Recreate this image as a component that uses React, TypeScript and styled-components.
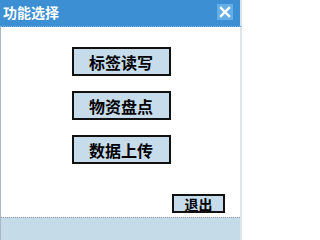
import styled, { createGlobalStyle } from "styled-components";

const GlobalStyle = createGlobalStyle`
  html, body {
    margin: 0;
    padding: 0;
    background: #ffffff;
  }
  * {
    box-sizing: border-box;
  }
`;

const cjk = `"Noto Sans CJK SC", "Noto Sans CJK TC", sans-serif`;

const Window = styled.div`
  width: 242px;
  height: 240px;
  display: flex;
  flex-direction: column;
  background: #ffffff;
  overflow: hidden;
`;

const TitleBar = styled.div`
  height: 27px;
  display: flex;
  align-items: center;
  justify-content: space-between;
  padding: 0 7px 3px 3px;
  background: #3d8fd3;
  border-bottom: 1px dotted #7fb4df;
  border-right: 2px solid #d8e4ee;
`;

const Title = styled.span`
  font-family: ${cjk};
  font-size: 14px;
  font-weight: 700;
  color: #ffffff;
  line-height: 1;
`;

const CloseBox = styled.div`
  width: 16px;
  height: 16px;
  display: flex;
  align-items: center;
  justify-content: center;
  background: #66aee8;
`;

const Body = styled.div`
  flex: 1;
  display: flex;
  flex-direction: column;
  border-left: 1px solid #a9b7c4;
  border-right: 2px solid #dfe5ea;
`;

const MenuList = styled.div`
  display: flex;
  flex-direction: column;
  align-items: center;
  gap: 15px;
  padding-top: 20px;
`;

const MenuButton = styled.button`
  width: 99px;
  height: 29px;
  margin-left: 1px;
  display: flex;
  align-items: center;
  justify-content: center;
  padding: 0;
  background: #c7dcea;
  border: 2px solid #111111;
  font-family: ${cjk};
  font-size: 16px;
  font-weight: 700;
  color: #000000;
  cursor: pointer;
`;

const ExitRow = styled.div`
  display: flex;
  justify-content: flex-end;
  padding-right: 15px;
  margin-top: 30px;
`;

const ExitButton = styled.button`
  width: 53px;
  height: 19px;
  display: flex;
  align-items: center;
  justify-content: center;
  padding: 0;
  background: #c7dcea;
  border: 2px solid #111111;
  font-family: ${cjk};
  font-size: 14px;
  font-weight: 700;
  color: #000000;
  line-height: 1;
  cursor: pointer;
`;

const StatusBar = styled.div`
  height: 23px;
  margin-top: auto;
  background: #c6dbe8;
  border-top: 1px dotted #8a9aa8;
`;

export default function App() {
  return (
    <>
      <GlobalStyle />
      <Window>
        <TitleBar>
          <Title>功能选择</Title>
          <CloseBox>
            <svg width="12" height="12" viewBox="0 0 12 12">
              <path
                d="M2 2 L10 10 M10 2 L2 10"
                stroke="#ffffff"
                strokeWidth="2.4"
                strokeLinecap="square"
              />
            </svg>
          </CloseBox>
        </TitleBar>
        <Body>
          <MenuList>
            <MenuButton>标签读写</MenuButton>
            <MenuButton>物资盘点</MenuButton>
            <MenuButton>数据上传</MenuButton>
          </MenuList>
          <ExitRow>
            <ExitButton>退出</ExitButton>
          </ExitRow>
          <StatusBar />
        </Body>
      </Window>
    </>
  );
}
